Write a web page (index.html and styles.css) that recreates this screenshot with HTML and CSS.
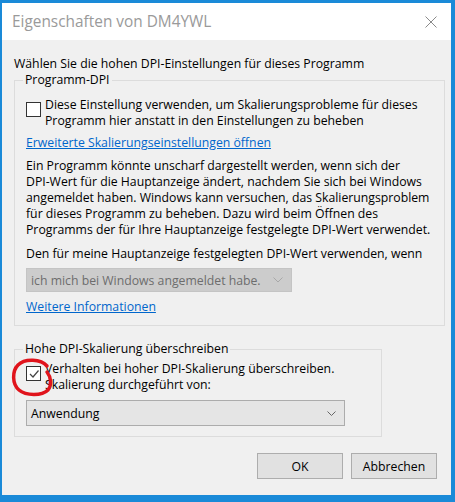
FILE: index.html
```html
<!DOCTYPE html>
<html lang="de">
<head>
  <meta charset="UTF-8">
  <title>Eigenschaften von DM4YWL</title>
  <link rel="stylesheet" href="styles.css">
</head>
<body>

<div class="window">
  <div class="titlebar">
    <span class="title">Eigenschaften von DM4YWL</span>
    <svg class="close" width="12" height="12" viewBox="0 0 12 12">
      <path d="M0.5 0.5 L11.5 11.5 M11.5 0.5 L0.5 11.5" stroke="#8a8a8a" stroke-width="1" fill="none"/>
    </svg>
  </div>

  <div class="content">
    <p class="intro">Wählen Sie die hohen DPI-Einstellungen für dieses Programm</p>

    <!-- Programm-DPI -->
    <fieldset class="group group-wide">
      <legend>Programm-DPI</legend>
      <div class="check-row">
        <span class="box"></span>
        <span>Diese Einstellung verwenden, um Skalierungsprobleme für dieses<br>Programm hier anstatt in den Einstellungen zu beheben</span>
      </div>
      <a class="link link-first" href="#">Erweiterte Skalierungseinstellungen öffnen</a>
      <p class="para">Ein Programm könnte unscharf dargestellt werden, wenn sich der<br>DPI-Wert für die Hauptanzeige ändert, nachdem Sie sich bei Windows<br>angemeldet haben. Windows kann versuchen, das Skalierungsproblem<br>für dieses Programm zu beheben. Dazu wird beim Öffnen des<br>Programms der für Ihre Hauptanzeige festgelegte DPI-Wert verwendet.</p>
      <p class="para para-next">Den für meine Hauptanzeige festgelegten DPI-Wert verwenden, wenn</p>
      <div class="select select-disabled">
        <span>ich mich bei Windows angemeldet habe.</span>
        <svg width="10" height="6" viewBox="0 0 10 6"><path d="M0.5 0.5 L5 5 L9.5 0.5" stroke="#a8a8a8" fill="none"/></svg>
      </div>
      <a class="link link-more" href="#">Weitere Informationen</a>
    </fieldset>

    <!-- Hohe DPI-Skalierung -->
    <fieldset class="group group-narrow">
      <legend>Hohe DPI-Skalierung überschreiben</legend>
      <div class="check-row check-row-second">
        <span class="box box-checked">
          <svg width="12" height="12" viewBox="0 0 12 12"><path d="M2 6 L5 9 L10.5 2.5" stroke="#444" stroke-width="1.2" fill="none"/></svg>
        </span>
        <span>Verhalten bei hoher DPI-Skalierung überschreiben.<br>Skalierung durchgeführt von:</span>
      </div>
      <div class="select select-active">
        <span>Anwendung</span>
        <svg width="9" height="5" viewBox="0 0 9 5"><path d="M0.5 0.5 L4.5 4.5 L8.5 0.5" stroke="#666" fill="none"/></svg>
      </div>
      <svg class="marker" width="44" height="42" viewBox="0 0 44 42">
        <path d="M36 9 C30 2 14 1 7 8 C1 14 1 27 8 33 C15 39 31 39 37 33 C41 28 40 20 36 15" stroke="#e0141c" stroke-width="3.5" fill="none" stroke-linecap="round"/>
      </svg>
    </fieldset>

    <div class="buttons">
      <button type="button">OK</button>
      <button type="button">Abbrechen</button>
    </div>
  </div>
</div>

</body>
</html>
```

FILE: styles.css
```css
body { margin: 0; background: #1a8ad8; font-family: "Open Sans", "Noto Sans", sans-serif; font-size: 12.25px; color: #000; }
.window { margin: 3px 4px 0 2px; height: 492px; background: #f0f0f0; display: flex; flex-direction: column; }
.titlebar { height: 37px; background: #fff; display: flex; align-items: center; justify-content: space-between; padding: 0 14px 0 10px; }
.title { font-size: 15.4px; color: #9a9a9a; }
.content { padding: 0 14px 0 12px; position: relative; }
.intro { margin: 16px 0 0; line-height: 16px; white-space: nowrap; }
.group { border: 1px solid #dcdcdc; margin: 0; padding: 9px 11px 10px 11px; position: relative; }
.group legend { padding: 0 2px; margin-left: -3px; line-height: 16px; }
.group-wide { width: 431px; box-sizing: border-box; margin-top: 0; }
.group-narrow { width: 368px; box-sizing: border-box; margin-top: 15px; padding-top: 4px; }
.check-row { display: flex; gap: 4px; line-height: 16px; white-space: nowrap; }
.box { width: 13px; height: 13px; border: 1px solid #333; background: #fff; flex: none; margin-top: 5px; display: flex; align-items: center; justify-content: center; }
.link { display: block; color: #0066cc; text-decoration: underline; line-height: 16px; }
.link-first { margin-top: 6px; }
.link-more { margin-top: 7px; }
.para { margin: 7px 0 0; line-height: 16px; white-space: nowrap; }
.para-next { margin-top: 8px; }
.select { display: flex; align-items: center; justify-content: space-between; box-sizing: border-box; padding: 0 8px 0 4px; }
.select-disabled { width: 266px; height: 24px; margin-top: 6px; background: #cccccc; border: 1px solid #c4c4c4; color: #6d6d6d; }
.select-active { width: 319px; height: 26px; margin-top: 7px; background: #e5e5e5; border: 1px solid #acacac; }
.marker { position: absolute; left: -4px; top: 0; }
.buttons { display: flex; justify-content: flex-end; gap: 8px; margin-top: 16px; }
.buttons button { width: 86px; height: 26px; background: #e1e1e1; border: 1px solid #adadad; font: inherit; color: #000; padding: 0; }
```
